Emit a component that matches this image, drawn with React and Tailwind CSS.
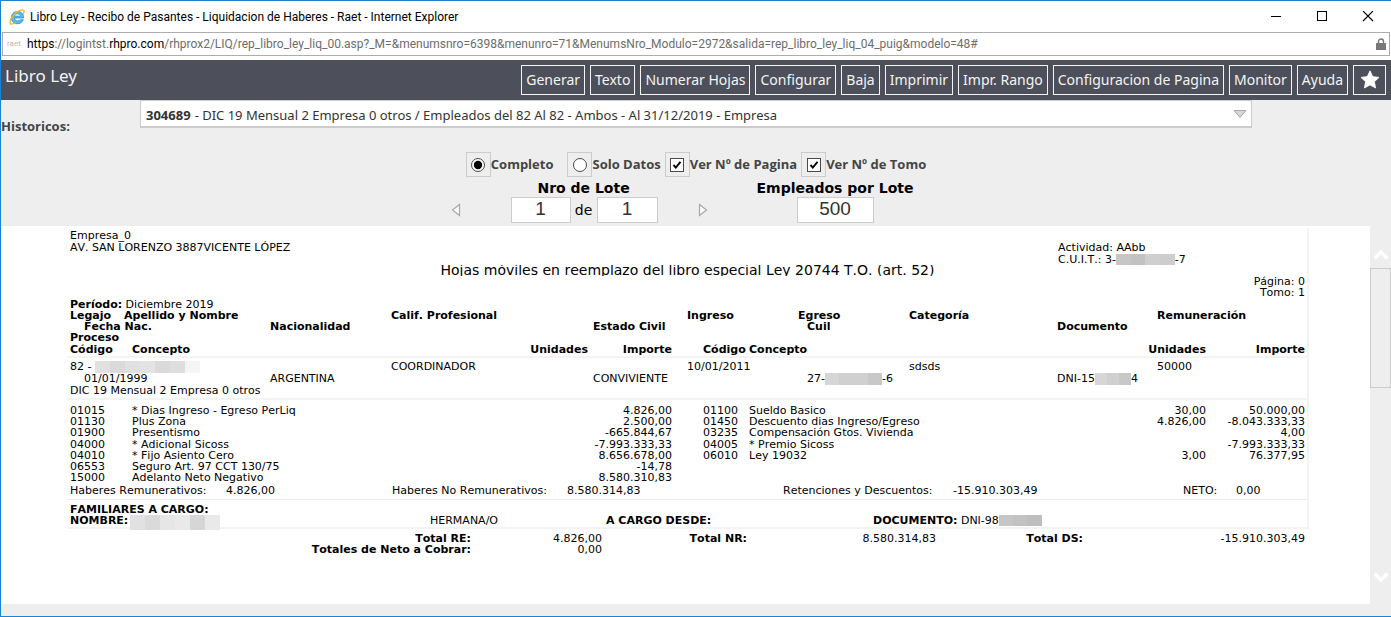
import React from 'react'
import { clsx } from 'clsx'

const UI = "font-['Noto_Sans',sans-serif]"
const CHROME = "font-['Roboto',sans-serif]"
const FORM = "font-['Open_Sans',sans-serif]"

const ACTIONS = [
  'Generar',
  'Texto',
  'Numerar Hojas',
  'Configurar',
  'Baja',
  'Imprimir',
  'Impr. Rango',
  'Configuracion de Pagina',
  'Monitor',
  'Ayuda',
]

const COLS = {
  legajo: 'grid-cols-[54fr_267fr_296fr_111fr_111fr_248fr_148fr]',
  nacimiento: 'grid-cols-[200fr_323fr_214fr_250fr_248fr]',
  concepto: 'grid-cols-[62fr_340fr_116fr_84fr_77fr_340fr_117fr_99fr]',
  haberes: 'grid-cols-[156fr_166fr_175fr_216fr_170fr_230fr_53fr_69fr]',
  familiar: 'grid-cols-[360fr_176fr_267fr_432fr]',
  totales: 'grid-cols-[401fr_131fr_145fr_189fr_147fr_222fr]',
  full: 'grid-cols-1',
}

// [codigo, concepto, unidades, importe] x 2
const CONCEPTS = [
  ['01015', '* Dias Ingreso - Egreso PerLiq', '', '4.826,00', '01100', 'Sueldo Basico', '30,00', '50.000,00'],
  ['01130', 'Plus Zona', '', '2.500,00', '01450', 'Descuento dias Ingreso/Egreso', '4.826,00', '-8.043.333,33'],
  ['01900', 'Presentismo', '', '-665.844,67', '03235', 'Compensación Gtos. Vivienda', '', '4,00'],
  ['04000', '* Adicional Sicoss', '', '-7.993.333,33', '04005', '* Premio Sicoss', '', '-7.993.333,33'],
  ['04010', '* Fijo Asiento Cero', '', '8.656.678,00', '06010', 'Ley 19032', '3,00', '76.377,95'],
  ['06553', 'Seguro Art. 97 CCT 130/75', '', '-14,78', '', '', '', ''],
  ['15000', 'Adelanto Neto Negativo', '', '8.580.310,83', '', '', '', ''],
]

const CONCEPT_ALIGN = ['', '', 'text-right', 'text-right', 'pl-[31px]', '', 'text-right', 'text-right']

function Row({ cols, tall, className, children }) {
  return (
    <tr className={clsx('grid', COLS[cols], tall ? 'leading-3' : 'leading-[11px]', className)}>{children}</tr>
  )
}

function Td({ className, children, ...rest }) {
  return (
    <td className={clsx('overflow-hidden whitespace-nowrap p-0', className)} {...rest}>
      {children}
    </td>
  )
}

function Th({ className, children }) {
  return <th className={clsx('overflow-hidden whitespace-nowrap p-0 text-left font-bold', className)}>{children}</th>
}

function Redacted({ shades, className }) {
  return (
    <span className={clsx('inline-flex align-top', className)} aria-hidden="true">
      {shades.map((s, i) => (
        <span key={i} className={clsx('flex-1', s)} />
      ))}
    </span>
  )
}

function ExplorerIcon() {
  return (
    <svg viewBox="0 0 16 16" className="h-4 w-4" aria-hidden="true">
      <path d="M14.600 9H5.400c.1 1.700 1.400 2.900 3.200 2.900 1.200 0 2.100-.4 2.600-1.200h3.100c-.9 2.600-3 4-5.800 4-3.700 0-6.200-2.500-6.200-6s2.600-6.200 6.300-6.200c3.900 0 6.200 2.600 6 6.500z" fill="#5bbdee" stroke="#1d7fc4" strokeWidth=".7" />
      <path d="M5.500 7h5.800c-.2-1.200-1.300-2.100-2.800-2.100S5.800 5.800 5.500 7z" fill="#fff" stroke="#1d7fc4" strokeWidth=".5" />
      <path d="M1.600 14.800C.2 13.600 1.500 9.500 4.800 6 8.300 2.200 12.900-.1 14.600 1.300c.8.700.6 2-.2 3.500" fill="none" stroke="#f2b91d" strokeWidth="1.300" strokeLinecap="round" />
      <path d="M1.600 14.800c1 .8 2.800.2 4.600-1" fill="none" stroke="#f2b91d" strokeWidth="1.200" strokeLinecap="round" />
    </svg>
  )
}

function TitleBar() {
  return (
    <div className={clsx(CHROME, 'flex h-[31px] shrink-0 items-center bg-white pl-2 text-xs text-black')}>
      <ExplorerIcon />
      <span className="ml-[5px] flex-1 whitespace-nowrap">
        Libro Ley - Recibo de Pasantes - Liquidacion de Haberes - Raet - Internet Explorer
      </span>
      <button className="flex h-full w-[46px] items-center justify-center" aria-label="Minimizar">
        <svg className="h-3 w-3" viewBox="0 0 12 12" shapeRendering="crispEdges"><path d="M1 5.500h10" stroke="#000" /></svg>
      </button>
      <button className="flex h-full w-[46px] items-center justify-center" aria-label="Maximizar">
        <svg className="h-3 w-3" viewBox="0 0 12 12" shapeRendering="crispEdges"><path d="M1.500.5h9v9h-9z" fill="none" stroke="#000" /></svg>
      </button>
      <button className="flex h-full w-[46px] items-center justify-center" aria-label="Cerrar">
        <svg className="h-3 w-3" viewBox="0 0 12 12"><path d="M1 0l10 10M11 0L1 10" stroke="#000" strokeWidth="1.100" /></svg>
      </button>
    </div>
  )
}

function AddressBar() {
  return (
    <div className="shrink-0 bg-white px-px pb-1">
      <div className={clsx(CHROME, 'flex h-6 items-center border border-[#adadad] text-xs text-[#6d6d6d]')}>
        <span className="w-6 pl-1 text-[8px] leading-none text-[#c3b2b0]" aria-hidden="true">
          r<span className="text-[#d9a79f]">a</span><span className="text-[#a9c8b8]">e</span>t
        </span>
        <span className="flex-1 whitespace-nowrap">
          <span className="text-black">https</span>://logintst.<span className="text-black">rhpro.com</span>
          /rhprox2/LIQ/rep_libro_ley_liq_00.asp?_M=&amp;menumsnro=6398&amp;menunro=71&amp;MenumsNro_Modulo=2972&amp;salida=rep_libro_ley_liq_04_puig&amp;modelo=48#
        </span>
        <svg className="mr-[3px] h-3 w-2.5" viewBox="0 0 10 12" aria-hidden="true">
          <path d="M2.500 6V3.500a2.500 2.500 0 0 1 5 0V6" fill="none" stroke="#777" strokeWidth="1.400" />
          <rect y="5" width="10" height="7" rx=".6" fill="#777" />
        </svg>
      </div>
    </div>
  )
}

function Toolbar() {
  return (
    <header className={clsx(UI, 'flex h-10 shrink-0 items-start justify-between bg-[#4d505b] pl-1 pr-[5px] text-[#f4f4f4]')}>
      <h1 className="pt-1 text-[17px] leading-6">Libro Ley</h1>
      <nav className="flex gap-[5px] pt-[5px]">
        {ACTIONS.map((label) => (
          <button key={label} className="h-[30px] whitespace-nowrap border border-[#f4f4f4] px-1 text-sm">
            {label}
          </button>
        ))}
        <button className="flex h-[30px] w-[33px] items-center justify-center border border-[#f4f4f4]" aria-label="Favoritos">
          <svg className="h-5 w-5" viewBox="0 0 20 20" aria-hidden="true">
            <path d="M10 .8l2.700 5.800 6.300.8-4.600 4.300 1.200 6.300-5.600-3.100-5.600 3.100 1.200-6.300L1 7.400l6.300-.8z" fill="#fff" stroke="#fff" strokeWidth=".8" strokeLinejoin="round" />
          </svg>
        </button>
      </nav>
    </header>
  )
}

function Option({ id, type, name, label, checked, className }) {
  const radio = type === 'radio'
  return (
    <div className={clsx('flex items-center', className)}>
      <span className="grid h-[25px] w-[25px] place-items-center border border-[#ccc]">
        <input
          id={id}
          type={type}
          name={name}
          defaultChecked={checked}
          className={clsx(
            'peer col-start-1 row-start-1 h-3.5 w-3.5 appearance-none border border-[#4a4a4a] bg-white',
            radio && 'rounded-full'
          )}
        />
        <svg className="pointer-events-none invisible col-start-1 row-start-1 h-3.5 w-3.5 peer-checked:visible" viewBox="0 0 14 14" aria-hidden="true">
          {radio ? (
            <circle cx="7" cy="7" r="4.200" fill="#000" />
          ) : (
            <path d="M3.500 7l2.300 2.600 4.700-5.800" fill="none" stroke="#000" strokeWidth="1.900" />
          )}
        </svg>
      </span>
      <label htmlFor={id} className="whitespace-nowrap">{label}</label>
    </div>
  )
}

function Arrow({ label, d }) {
  return (
    <button aria-label={label}>
      <svg className="h-3.5 w-2.5" viewBox="0 0 10 14" aria-hidden="true">
        <path d={d} fill="#fafafa" stroke="#a8a8a8" strokeWidth="1.200" />
      </svg>
    </button>
  )
}

const FIELD =
  "h-[26px] border border-[#ccc] bg-white pb-0.5 text-center font-['Liberation_Sans',sans-serif] text-[19px] leading-5 text-[#333]"

function Filters() {
  return (
    <section className="shrink-0 bg-[#eee] pb-[3px] text-[#444]">
      <div className="flex">
        <label htmlFor="historicos" className={clsx(FORM, 'w-[139px] pt-4 text-[13px] font-bold leading-5')}>Historicos:</label>
        <div className={clsx(UI, 'mr-[139px] flex h-7 flex-1 items-center border border-b-2 border-[#ccc] bg-white pl-[5px] pr-1 text-[13px] text-[#333]')}>
          <b className="pt-1">304689</b>
          <select id="historicos" className="h-full flex-1 appearance-none bg-transparent pl-1 pt-1">
            <option>- DIC 19 Mensual 2 Empresa 0 otros / Empleados del 82 Al 82 - Ambos - Al 31/12/2019 - Empresa</option>
          </select>
          <svg className="h-2.5 w-3.5" viewBox="0 0 14 10" aria-hidden="true">
            <path d="M1 1.500h12L7 8.500z" fill="#d6d6d6" stroke="#a9a9a9" />
          </svg>
        </div>
      </div>

      <div className={clsx(FORM, 'mt-4 flex justify-center text-[13px] font-bold')}>
        <Option id="completo" type="radio" name="modo" label="Completo" checked className="mr-3.5" />
        <Option id="solo" type="radio" name="modo" label="Solo Datos" className="mr-1" />
        <Option id="pagina" type="checkbox" label="Ver Nº de Pagina" checked className="mr-1" />
        <Option id="tomo" type="checkbox" label="Ver Nº de Tomo" checked />
      </div>

      <div className="flex justify-center gap-10 pr-7 pt-0.5 font-['DejaVu_Sans',sans-serif] text-sm text-black">
        <div className="w-[266px]">
          <div className="text-center font-bold leading-[18px]" id="lote">Nro de Lote</div>
          <div className="flex items-center">
            <Arrow label="Anterior" d="M8.500 1.500v11L1.500 7z" />
            <input className={clsx(FIELD, 'ml-[50px] w-[60px]')} defaultValue="1" aria-labelledby="lote" />
            <span className="w-[26px] text-center">de</span>
            <input className={clsx(FIELD, 'mr-10 w-[61px]')} defaultValue="1" aria-label="Total de lotes" />
            <Arrow label="Siguiente" d="M1.500 1.500v11L8.500 7z" />
          </div>
        </div>
        <div className="text-center">
          <label htmlFor="por-lote" className="block font-bold leading-[18px]">Empleados por Lote</label>
          <input id="por-lote" className={clsx(FIELD, 'w-[77px]')} defaultValue="500" />
        </div>
      </div>
    </section>
  )
}

function Report() {
  return (
    <div className="min-w-0 flex-1 bg-white pl-[66px] pr-[61px] pt-0.5 font-['DejaVu_Sans',sans-serif] text-[11px] text-black [font-kerning:none]">
      <div className="border-r-2 border-[#f3f3f3]">
        <div className="pl-[3px] pr-0.5 pt-0.5">
          <div className="grid grid-cols-[988fr_247fr]">
            <div className="leading-3">
              <div>Empresa_0</div>
              <div>AV. SAN LORENZO 3887VICENTE LÓPEZ</div>
            </div>
            <div className="pt-3">
              <div className="leading-3">Actividad: AAbb</div>
              <div className="leading-[11px]">
                C.U.I.T.: 3-
                <Redacted className="h-[11px] w-[59px]" shades={['bg-[#c6c6c6]', 'bg-[#c2c2c2]', 'bg-[#cfcfcf]', 'bg-[#cdcdcd]']} />
                -7
              </div>
            </div>
          </div>
          <h2 className="h-[11px] overflow-hidden text-center text-sm leading-[11px]">
            Hojas móviles en reemplazo del libro especial Ley 20744 T.O. (art. 52)
          </h2>
          <div className="text-right">
            <div className="leading-[11px]">Página: 0</div>
            <div className="leading-3">Tomo: 1</div>
          </div>
          <div className="leading-[11px]">
            <b>Período:</b> Diciembre 2019
          </div>
        </div>

        <table className="block">
          <thead className="block border-b-2 border-[#f3f3f3] pb-px pl-[3px] pr-0.5">
            <Row cols="legajo">
              <Th>Legajo</Th>
              <Th>Apellido y Nombre</Th>
              <Th>Calif. Profesional</Th>
              <Th>Ingreso</Th>
              <Th>Egreso</Th>
              <Th>Categoría</Th>
              <Th>Remuneración</Th>
            </Row>
            <Row cols="nacimiento">
              <Th className="pl-3.5">Fecha Nac.</Th>
              <Th>Nacionalidad</Th>
              <Th>Estado Civil</Th>
              <Th>Cuil</Th>
              <Th>Documento</Th>
            </Row>
            <Row cols="full" tall>
              <Th>Proceso</Th>
            </Row>
            <Row cols="concepto">
              {['Código', 'Concepto', 'Unidades', 'Importe', 'Código', 'Concepto', 'Unidades', 'Importe'].map((h, i) => (
                <th key={i} className={clsx('overflow-hidden whitespace-nowrap p-0 font-bold', CONCEPT_ALIGN[i] || 'text-left', i === 4 && 'text-left')}>
                  {h}
                </th>
              ))}
            </Row>
          </thead>

          <tbody className="block border-b-2 border-[#f3f3f3] pb-0.5 pl-[3px] pr-0.5 pt-[3px]">
            <Row cols="legajo" tall>
              <td className="min-w-0 whitespace-nowrap p-0">
                82 -{' '}
                <Redacted className="h-3 w-[105px]" shades={['bg-[#e1e1e1]', 'bg-[#dadada]', 'bg-[#e0e0e0]', 'bg-[#e3e3e3]', 'bg-[#dadada]', 'bg-[#dedede]', 'bg-[#f5f5f5]']} />
              </td>
              <Td />
              <Td>COORDINADOR</Td>
              <Td>10/01/2011</Td>
              <Td />
              <Td>sdsds</Td>
              <Td>50000</Td>
            </Row>
            <Row cols="nacimiento" tall>
              <Td className="pl-3.5">01/01/1999</Td>
              <Td>ARGENTINA</Td>
              <Td>CONVIVIENTE</Td>
              <Td>
                27-
                <Redacted className="h-3 w-[57px]" shades={['bg-[#d6d6d6]', 'bg-[#d0d0d0]', 'bg-[#d0d0d0]', 'bg-[#c8c8c8]']} />
                -6
              </Td>
              <Td>
                DNI-15
                <Redacted className="h-3 w-9" shades={['bg-[#d6d6d6]', 'bg-[#d0d0d0]', 'bg-[#c8c8c8]']} />
                4
              </Td>
            </Row>
            <Row cols="full">
              <Td>DIC 19 Mensual 2 Empresa 0 otros</Td>
            </Row>
          </tbody>

          <tbody className="block pl-[3px] pr-0.5 pt-[5px]">
            {CONCEPTS.map((row, i) => (
              <Row key={row[0]} cols="concepto" tall={i === 2 || i === 6}>
                {row.map((cell, j) => (
                  <Td key={j} className={CONCEPT_ALIGN[j]}>{cell}</Td>
                ))}
              </Row>
            ))}
          </tbody>

          <tbody className="block border-b border-[#ececec] pb-0.5 pl-[3px] pr-0.5 pt-px">
            <Row cols="haberes" tall>
              <Td>Haberes Remunerativos:</Td>
              <Td>4.826,00</Td>
              <Td>Haberes No Remunerativos:</Td>
              <Td>8.580.314,83</Td>
              <Td>Retenciones y Descuentos:</Td>
              <Td>-15.910.303,49</Td>
              <Td>NETO:</Td>
              <Td>0,00</Td>
            </Row>
          </tbody>

          <tbody className="block border-b-2 border-[#f3f3f3] pb-px pl-[3px] pr-0.5 pt-1">
            <Row cols="full">
              <Th>FAMILIARES A CARGO:</Th>
            </Row>
            <Row cols="familiar">
              <td className="h-[11px] whitespace-nowrap p-0">
                <b>NOMBRE:</b>
                <Redacted className="ml-0.5 h-[15px] w-[90px]" shades={['bg-[#e1e1e1]', 'bg-[#dadada]', 'bg-[#e6e6e6]', 'bg-[#e9e9e9]', 'bg-[#d6d6d6]', 'bg-[#e9e9e9]']} />
              </td>
              <Td className="h-[11px]">HERMANA/O</Td>
              <Td className="h-[11px] font-bold">A CARGO DESDE:</Td>
              <Td className="h-[11px]">
                <b>DOCUMENTO:</b> DNI-98
                <Redacted className="h-[11px] w-[43px]" shades={['bg-[#c6c6c6]', 'bg-[#c2c2c2]', 'bg-[#bebebe]']} />
              </Td>
            </Row>
          </tbody>
        </table>
      </div>

      <table className="block pl-[3px] pr-1 pt-1">
        <tbody className="block">
          <Row cols="totales" className="text-right">
            <Th className="text-right!">Total RE:</Th>
            <Td>4.826,00</Td>
            <Th className="text-right!">Total NR:</Th>
            <Td>8.580.314,83</Td>
            <Th className="text-right!">Total DS:</Th>
            <Td>-15.910.303,49</Td>
          </Row>
          <Row cols="totales" className="text-right">
            <Th className="text-right!">Totales de Neto a Cobrar:</Th>
            <Td>0,00</Td>
          </Row>
        </tbody>
      </table>
    </div>
  )
}

function ScrollBar() {
  return (
    <div className="flex w-[21px] shrink-0 flex-col items-center bg-[#eee] pb-5 pt-5">
      <svg className="h-[22px] w-4" viewBox="0 0 16 22" aria-hidden="true">
        <path d="M1.500 12.500L8 6l6.500 6.500" fill="none" stroke="#fff" strokeWidth="3.500" />
      </svg>
      <div className="h-[120px] w-full border border-[#ccc]" />
      <svg className="mt-auto h-3.5 w-4" viewBox="0 0 16 14" aria-hidden="true">
        <path d="M1.500 3.500L8 10l6.500-6.500" fill="none" stroke="#fff" strokeWidth="3.500" />
      </svg>
    </div>
  )
}

export default function App() {
  return (
    <div className="flex min-h-screen flex-col border-y border-l border-[#1883d7] bg-[#eee]">
      <TitleBar />
      <AddressBar />
      <Toolbar />
      <Filters />
      <main className="flex flex-1">
        <Report />
        <ScrollBar />
      </main>
      <div className="h-3 shrink-0" />
    </div>
  )
}
